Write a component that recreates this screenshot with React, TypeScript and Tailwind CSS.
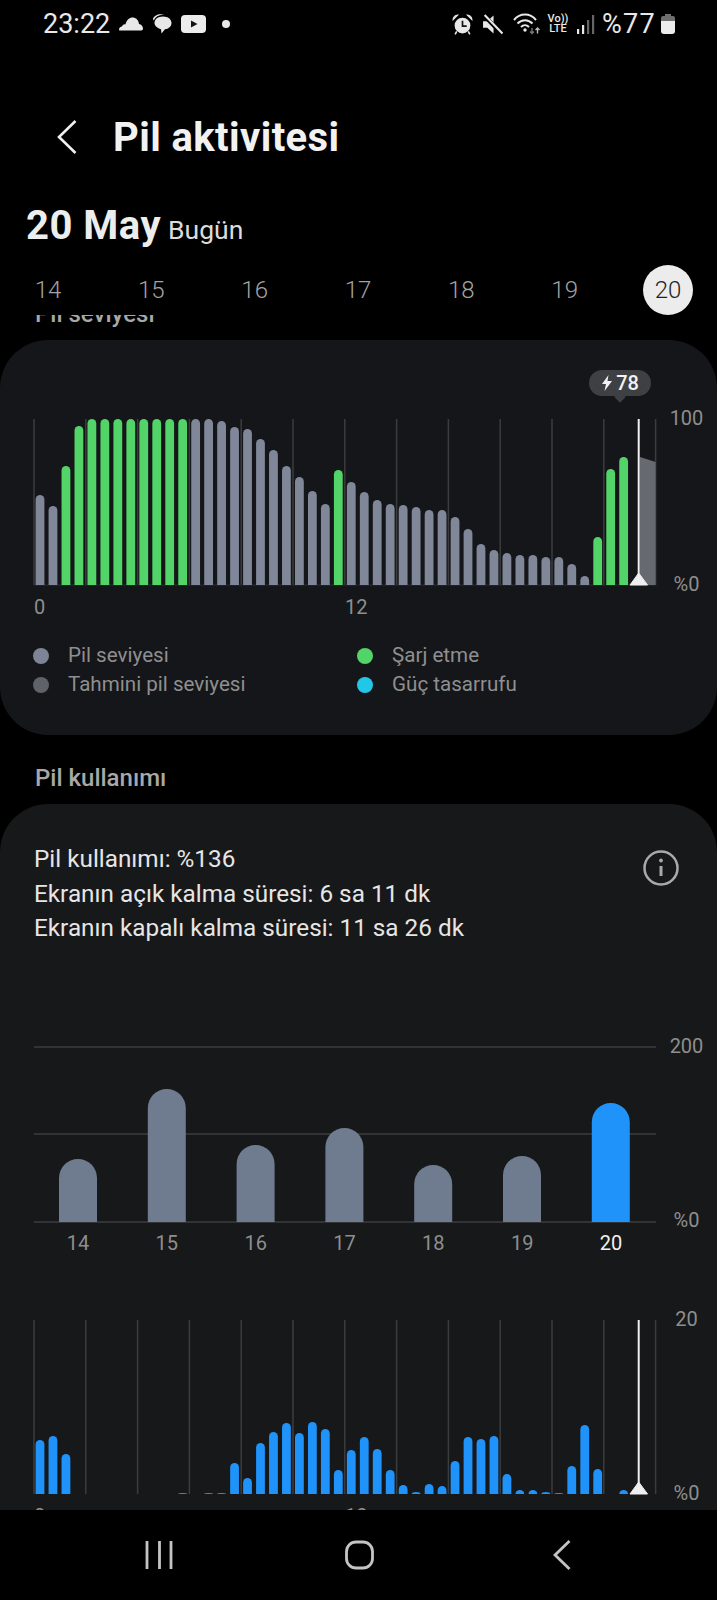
const GRID_X = [34, 85.8, 137.6, 189.4, 241.2, 293, 344.8, 396.6, 448.4, 500.2, 552, 603.8, 655.6];

// bar heights in px, index = half hour slot
const LEVEL = [
	90, 79, 119, 159, 166, 166, 166, 166, 166, 166, 166, 166, 166, 166, 164, 158, 156, 146, 135, 119, 108, 94, 81, 115, 103,
	93, 85, 81, 80, 78, 75, 75, 68, 56, 41, 35, 32, 30, 30, 28, 28, 21, 9, 48, 116, 128
];
const CHARGING = [2, 3, 4, 5, 6, 7, 8, 9, 10, 11, 23, 43, 44, 45];
const USAGE = [
	54, 58, 40, 0, 0, 0, 0, 0, 0, 0, 0, 1, 0, 1, 1, 31, 16, 51, 62, 71, 61, 72, 65, 24, 44, 57, 45, 24, 9, 2, 10, 8, 33, 57,
	55, 58, 20, 4, 4, 2, 1, 28, 69, 25, 0, 4
];
const DAYS = [
	{ day: '14', top: 1159 },
	{ day: '15', top: 1089 },
	{ day: '16', top: 1145 },
	{ day: '17', top: 1128 },
	{ day: '18', top: 1165 },
	{ day: '19', top: 1156 },
	{ day: '20', top: 1103 }
];

const barPath = (x: number, w: number, base: number, h: number) => {
	const r = Math.min(w / 2, h);
	return `M${x} ${base}V${base - h + r}A${w / 2} ${r} 0 0 1 ${x + w} ${base - h + r}V${base}Z`;
};

const Cursor = ({ top, base }: { top: number; base: number }) => (
	<>
		<line x1={638.7} x2={638.7} y1={top} y2={base} stroke="#f1f1f1" strokeWidth={2} />
		<path d={`M638.7 ${base - 12}L647.5 ${base}H630Z`} fill="#efefef" stroke="#efefef" strokeWidth={1} strokeLinejoin="round" />
	</>
);

const GridLines = ({ top, base }: { top: number; base: number }) => (
	<>
		{GRID_X.map((x) => (
			<line key={x} x1={x} x2={x} y1={top} y2={base} stroke="#3b3c3e" strokeWidth={1.5} />
		))}
	</>
);

const LevelChart = () => (
	<svg width={664} height={190} viewBox="0 0 664 190" className="shrink-0">
		<GridLines top={13} base={179} />
		<line x1={34} x2={656} y1={179} y2={179} stroke="#2c2d2f" strokeWidth={1} />
		{LEVEL.map((h, i) => (
			<path key={i} d={barPath(35.6 + i * 12.97, 8.8, 179, h)} fill={CHARGING.includes(i) ? '#52d468' : '#7f8799'} />
		))}
		<path d="M640 51L655.6 56V179H640Z" fill="#666a70" />
		<Cursor top={13} base={179} />
	</svg>
);

const UsageChart = () => (
	<svg width={664} height={198} viewBox="0 0 664 198" className="shrink-0">
		<GridLines top={13} base={187} />
		{USAGE.map((h, i) => (h > 0 ? <path key={i} d={barPath(35.6 + i * 12.97, 8.8, 187, h)} fill="#2093fa" /> : null))}
		<Cursor top={13} base={187} />
	</svg>
);

const WeekChart = () => (
	<svg width={664} height={198} viewBox="0 0 664 198" className="shrink-0">
		{[13, 100, 188].map((y) => (
			<line key={y} x1={34} x2={656} y1={y} y2={y} stroke="#3b3c3e" strokeWidth={1.5} />
		))}
		{DAYS.map((d, i) => (
			<path
				key={d.day}
				d={barPath(59 + i * 88.8, 38, 188, 1222 - d.top)}
				fill={d.day === '20' ? '#2093fa' : '#6f7c90'}
			/>
		))}
	</svg>
);

const AxisLabels = ({ top, bottom }: { top: string; bottom: string }) => (
	<div className="flex w-[45px] flex-col justify-between text-center text-[20px] leading-[24px] text-[#8e8e8e]">
		<span>{top}</span>
		<span>{bottom}</span>
	</div>
);

const HourLabels = () => (
	<div className="flex h-[22px] pl-[34px] text-[20px] leading-[22px] text-[#8e8e8e]">
		<span className="w-[311px]">0</span>
		<span>12</span>
	</div>
);

const LegendItem = ({ color, label }: { color: string; label: string }) => (
	<div className="flex h-[29px] items-center">
		<span className={`mr-[19px] h-4 w-4 rounded-full ${color}`} />
		<span>{label}</span>
	</div>
);

const StatusBar = () => (
	<div className="flex h-[48px] items-center pl-[43px] pr-[42px] text-[#e8e8e8]">
		<span className="text-[27px] leading-none">23:22</span>
		<svg width="24" height="14" viewBox="0 0 24 14" className="ml-[9px]" fill="#e8e8e8">
			<path d="M1 13.5C.3 13.5 0 13 0 12.4c0-1.6 1.300-2.800 3-3C3.600 7.800 5 7 6.500 7.300 7.500 3 10.500.5 13.500.5c3.500 0 6 2.500 6.500 6.500 2.200.3 4 2.300 4 4.500 0 1.300-.6 2-1.800 2Z" />
		</svg>
		<svg width="21" height="20" viewBox="0 0 21 20" className="ml-[8px]" fill="#e8e8e8">
			<path d="M5 1.500C7 .2 10.500 0 13 1c-4.500-.3-9 1.500-10 5.500C1 5 2.500 3 5 1.500Z" />
			<path d="M12 2.500c5 0 8.500 2.800 8.500 6.500 0 3.500-3 6-6.500 6.300l-3.500 4.200-.5-4.300C6.500 14.200 3.500 12 3.500 9c0-3.700 3.500-6.500 8.500-6.500Z" />
		</svg>
		<svg width="25" height="18" viewBox="0 0 25 18" className="ml-[9px]">
			<rect width="25" height="18" rx="4" fill="#ececec" />
			<path d="M10 5.500L16.500 9L10 12.500Z" fill="#111" />
		</svg>
		<span className="ml-[16px] h-2 w-2 rounded-full bg-[#e8e8e8]" />

		<div className="ml-auto flex items-center">
			<svg width="21" height="21" viewBox="0 0 20 20">
				<circle cx="10" cy="11" r="7.500" fill="#e8e8e8" />
				<path d="M10 6.500V11.500H14" fill="none" stroke="#111" strokeWidth="1.600" />
				<path d="M1 5.500C1 3 3 1 5.500 1ZM19 5.500C19 3 17 1 14.500 1Z" fill="#e8e8e8" stroke="#e8e8e8" strokeWidth="1" />
				<path d="M4.500 16.500L3 19.500M15.500 16.500L17 19.500" stroke="#e8e8e8" strokeWidth="1.500" />
			</svg>
			<svg width="21" height="21" viewBox="0 0 20 20" className="ml-[9px]">
				<path d="M1 7H5L11 1.500V18.500L5 13H1Z" fill="#e8e8e8" />
				<path d="M2 1.500L19 19" stroke="#000" strokeWidth="4" />
				<path d="M2.500 1L19.500 18.500" stroke="#e8e8e8" strokeWidth="2" />
			</svg>
			<svg width="28" height="22" viewBox="0 0 28 22" className="ml-[10px]" fill="none" stroke="#e8e8e8">
				<path d="M1 7C7-.3 17-.3 23 7" strokeWidth="2" />
				<path d="M4.500 10.500C9 6 15 6 19.500 10.500" strokeWidth="2" />
				<path d="M8 14C10.500 11.500 13.500 11.500 16 14" strokeWidth="2" />
				<circle cx="12" cy="17" r="1.700" fill="#e8e8e8" stroke="none" />
				<path d="M19 15V20.500M17 18.500L19 20.500L21 18.500" stroke="#777" strokeWidth="1.400" />
				<path d="M24.500 20.500V15M22.500 17L24.500 15L26.500 17" stroke="#bbb" strokeWidth="1.400" />
			</svg>
			<div className="ml-[7px] flex w-[20px] flex-col items-center text-[11px] font-medium leading-[10px]">
				<span>Vo))</span>
				<span>LTE</span>
			</div>
			<svg width="18" height="20" viewBox="0 0 18 20" className="ml-[9px]">
				<rect x="0" y="15" width="2.200" height="5" fill="#e8e8e8" />
				<rect x="5" y="11" width="2.200" height="9" fill="#e8e8e8" />
				<rect x="10" y="6" width="2.200" height="14" fill="#666" />
				<rect x="15" y="1" width="2.200" height="19" fill="#666" />
			</svg>
			<span className="ml-[7px] text-[27px] leading-none tracking-[1.300px]">%77</span>
			<svg width="14" height="20" viewBox="0 0 14 20" className="ml-[5px]">
				<path d="M4 0H10V2H12Q14 2 14 4V7H0V4Q0 2 2 2H4Z" fill="#6e6e6e" />
				<path d="M0 7H14V17Q14 20 11 20H3Q0 20 0 17Z" fill="#ececec" />
			</svg>
		</div>
	</div>
);

const App = () => {
	return (
		<div className="flex h-[1600px] w-[717px] flex-col overflow-hidden bg-black font-['Roboto',sans-serif] text-[#e6e6e6]">
			<StatusBar />

			<div className="mt-[57px] flex h-[64px] items-center pl-[57px]">
				<svg width="20" height="34" viewBox="0 0 20 34" fill="none" stroke="#f0f0f0" strokeWidth="2.600">
					<path d="M18.500 1L2 17L18.500 33" />
				</svg>
				<h1 className="ml-[36px] pt-[2px] text-[40px] font-bold leading-none tracking-[0.4px] text-[#f2f2f2]">Pil aktivitesi</h1>
			</div>

			<div className="mt-[27px] flex h-[52px] items-baseline pl-[26px]">
				<span className="text-[40px] font-bold tracking-[0.5px] text-[#ededed]">20 May</span>
				<span className="ml-[7px] text-[26.500px] text-[#dcdcdc]">Bugün</span>
			</div>

			<div className="mt-[17px] flex h-[50px] items-center justify-between pl-[23px] pr-[24px] text-[24px] font-light text-[#a3a3a3]">
				{['14', '15', '16', '17', '18', '19'].map((d) => (
					<span key={d} className="w-[50px] text-center">
						{d}
					</span>
				))}
				<span className="flex h-[50px] w-[50px] items-center justify-center rounded-full bg-[#ececec] text-[#222]">20</span>
			</div>

			<div className="min-h-0 flex-1 overflow-hidden">
				<h2 className="-mt-[16px] h-[30px] pl-[35px] text-[24px] font-medium leading-[30px] text-[#a8a8a8]">Pil seviyesi</h2>

				<section className="mt-[11px] h-[395px] rounded-[48px] bg-[#151619] pt-[30px]">
					<div className="relative ml-[589px] flex h-[26px] w-[62px] items-center justify-center gap-[4px] rounded-full bg-[#3e4043] pl-px text-[20px] font-medium text-[#f2f2f2]">
						<svg width="10" height="16" viewBox="0 0 10 16" fill="#f2f2f2">
							<path d="M6.500 0L0 9H4L2.500 16L10 6H5.500Z" />
						</svg>
						<span>78</span>
						<span className="absolute -bottom-[5px] left-[27px] h-[8px] w-[8px] rotate-45 bg-[#3e4043]" />
					</div>

					<div className="mt-[10px] flex h-[190px]">
						<LevelChart />
						<AxisLabels top="100" bottom="%0" />
					</div>
					<HourLabels />

					<div className="ml-[33px] mt-[23px] grid grid-cols-[324px_1fr] text-[20.600px] text-[#8f8f8f]">
						<LegendItem color="bg-[#7d8496]" label="Pil seviyesi" />
						<LegendItem color="bg-[#52d468]" label="Şarj etme" />
						<LegendItem color="bg-[#5f6268]" label="Tahmini pil seviyesi" />
						<LegendItem color="bg-[#22c7e8]" label="Güç tasarrufu" />
					</div>
				</section>

				<h2 className="mt-[28px] h-[30px] pl-[35px] text-[24px] font-medium leading-[30px] text-[#a8a8a8]">Pil kullanımı</h2>

				<section className="mt-[11px] h-[800px] rounded-t-[48px] bg-[#17181a] pt-[38px]">
					<div className="flex items-start justify-between pl-[34px] pr-[38px]">
						<div className="text-[24.300px] leading-[34.500px] text-[#e6e6e6]">
							<p>Pil kullanımı: %136</p>
							<p>Ekranın açık kalma süresi: 6 sa 11 dk</p>
							<p>Ekranın kapalı kalma süresi: 11 sa 26 dk</p>
						</div>
						<svg width="36" height="36" viewBox="0 0 36 36" className="mt-[8px]" fill="none" stroke="#a9a9a9" strokeWidth="2.500">
							<circle cx="18" cy="18" r="16.500" />
							<path d="M18 16V26" strokeWidth="3" />
							<circle cx="18" cy="10.500" r="1.900" fill="#a9a9a9" stroke="none" />
						</svg>
					</div>

					<div className="mt-[88px] flex h-[198px]">
						<WeekChart />
						<AxisLabels top="200" bottom="%0" />
					</div>
					<div className="-mt-px ml-[59px] flex h-[24px] w-[571px] justify-between text-[20px] leading-[24px] text-[#8e8e8e]">
						{DAYS.map((d) => (
							<span key={d.day} className={`w-[38px] text-center ${d.day === '20' ? 'text-[#f0f0f0]' : ''}`}>
								{d.day}
							</span>
						))}
					</div>

					<div className="mt-[52px] flex h-[198px]">
						<UsageChart />
						<AxisLabels top="20" bottom="%0" />
					</div>
					<HourLabels />
				</section>
			</div>

			<nav className="flex h-[90px] shrink-0 items-center bg-black pl-[145px]">
				<svg width="28" height="30" viewBox="0 0 28 30" fill="none" stroke="#c4c4c4" strokeWidth="2.800">
					<path d="M2 1V29M14.500 1V29M26 1V29" />
				</svg>
				<svg width="29" height="30" viewBox="0 0 29 30" className="ml-[172px]" fill="none" stroke="#c4c4c4" strokeWidth="2.800">
					<rect x="1.500" y="2" width="26" height="26" rx="9.500" />
				</svg>
				<svg width="18" height="30" viewBox="0 0 18 30" className="ml-[179px]" fill="none" stroke="#c4c4c4" strokeWidth="2.800">
					<path d="M16.500 1L2 15L16.500 29" />
				</svg>
			</nav>
		</div>
	);
};

export default App;
